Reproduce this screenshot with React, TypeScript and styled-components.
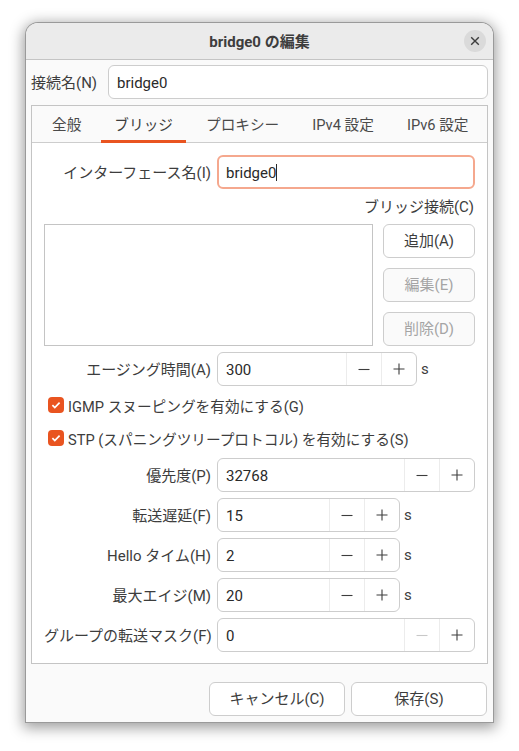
import React from 'react'
import styled, { createGlobalStyle } from 'styled-components'

const GlobalStyle = createGlobalStyle`
  html, body {
    margin: 0;
    padding: 0;
    background: #ffffff;
  }
  body {
    font-family: Roboto, "Noto Sans CJK JP", sans-serif;
    font-size: 15px;
    color: #3d3d3d;
  }
`

const TABS = ['全般', 'ブリッジ', 'プロキシー', 'IPv4 設定', 'IPv6 設定']

const Minus = () => (
  <svg width="14" height="14" viewBox="0 0 14 14">
    <path d="M1.5 7.5h11" stroke="currentColor" strokeWidth="1.1" fill="none" />
  </svg>
)

const Plus = () => (
  <svg width="14" height="14" viewBox="0 0 14 14">
    <path d="M1.5 7h11M7 1.5v11" stroke="currentColor" strokeWidth="1.1" fill="none" />
  </svg>
)

const Spin = (props: { value: string; width: number; unit?: boolean; minusOff?: boolean }) => {
  const { value, width, unit, minusOff } = props
  return (
    <>
      <SpinBox $width={width}>
        <SpinValue>{value}</SpinValue>
        <SpinButton $off={minusOff}><Minus /></SpinButton>
        <SpinButton><Plus /></SpinButton>
      </SpinBox>
      {unit && <Unit>s</Unit>}
    </>
  )
}

const Check = (props: { children: React.ReactNode }) => (
  <CheckRow>
    <CheckBox>
      <svg width="12" height="12" viewBox="0 0 12 12">
        <path d="M2.4 6.2l2.4 2.4 4.8-4.9" stroke="#fff" strokeWidth="1.7" fill="none" />
      </svg>
    </CheckBox>
    {props.children}
  </CheckRow>
)

const App = () => {
  return (
    <Stage>
      <GlobalStyle />
      <Dialog>
        <Header>
          <Title>bridge0 の編集</Title>
          <CloseButton>
            <svg width="12" height="12" viewBox="0 0 12 12">
              <path d="M2.2 2.2l7.6 7.6M9.8 2.2l-7.6 7.6" stroke="#3d3d3d" strokeWidth="1.4" fill="none" />
            </svg>
          </CloseButton>
        </Header>
        <Body>
          <NameRow>
            <NameLabel>接続名(N)</NameLabel>
            <Entry>bridge0</Entry>
          </NameRow>
          <Notebook>
            <TabBar>
              {TABS.map((t) => (
                <Tab key={t} $active={t === 'ブリッジ'}>{t}</Tab>
              ))}
            </TabBar>
            <Page>
              <IfaceRow>
                <FieldLabel>インターフェース名(I)</FieldLabel>
                <FocusedEntry>bridge0<Caret /></FocusedEntry>
              </IfaceRow>
              <ConnLabel>ブリッジ接続(C)</ConnLabel>
              <ListRow>
                <ListBox />
                <ListButtons>
                  <Button>追加(A)</Button>
                  <Button $off>編集(E)</Button>
                  <Button $off>削除(D)</Button>
                </ListButtons>
              </ListRow>
              <FieldRow>
                <FieldLabel>エージング時間(A)</FieldLabel>
                <Spin value="300" width={200} unit />
              </FieldRow>
              <Checks>
                <Check>IGMP スヌーピングを有効にする(G)</Check>
                <Check>STP (スパニングツリープロトコル) を有効にする(S)</Check>
              </Checks>
              <Fields>
                <FieldRow>
                  <FieldLabel>優先度(P)</FieldLabel>
                  <Spin value="32768" width={258} />
                </FieldRow>
                <FieldRow>
                  <FieldLabel>転送遅延(F)</FieldLabel>
                  <Spin value="15" width={183} unit />
                </FieldRow>
                <FieldRow>
                  <FieldLabel>Hello タイム(H)</FieldLabel>
                  <Spin value="2" width={183} unit />
                </FieldRow>
                <FieldRow>
                  <FieldLabel>最大エイジ(M)</FieldLabel>
                  <Spin value="20" width={183} unit />
                </FieldRow>
                <FieldRow>
                  <FieldLabel>グループの転送マスク(F)</FieldLabel>
                  <Spin value="0" width={258} minusOff />
                </FieldRow>
              </Fields>
            </Page>
          </Notebook>
          <Actions>
            <ActionButton>キャンセル(C)</ActionButton>
            <ActionButton>保存(S)</ActionButton>
          </Actions>
        </Body>
      </Dialog>
    </Stage>
  )
}

export default App

const Stage = styled.div`
  padding: 23px 26px;
  width: 467px;
  height: 699px;
`

const Dialog = styled.div`
  width: 467px;
  height: 699px;
  box-sizing: border-box;
  display: flex;
  flex-direction: column;
  background: #fafafa;
  border-radius: 12px 12px 0 0;
  box-shadow: 0 0 0 1px #9a9a9a, 0 3px 14px 3px rgba(0, 0, 0, 0.38);
`

const Header = styled.div`
  position: relative;
  flex: none;
  height: 37px;
  box-sizing: border-box;
  padding-bottom: 2px;
  display: flex;
  align-items: center;
  justify-content: center;
  background: #ebebeb;
  border-bottom: 1px solid #c4c4c4;
  border-radius: 12px 12px 0 0;
`

const Title = styled.div`
  font-size: 15px;
  font-weight: 700;
  color: #3d3d3d;
`

const CloseButton = styled.div`
  position: absolute;
  right: 7px;
  top: 7px;
  width: 22px;
  height: 22px;
  border-radius: 50%;
  background: #dadada;
  display: flex;
  align-items: center;
  justify-content: center;
`

const Body = styled.div`
  flex: 1;
  display: flex;
  flex-direction: column;
  padding: 5px 5px 6px 5px;
`

const NameRow = styled.div`
  display: flex;
  align-items: center;
  gap: 13px;
  height: 34px;
`

const NameLabel = styled.div`
  width: 64px;
  padding-bottom: 2px;
  text-align: right;
  white-space: nowrap;
`

const Entry = styled.div`
  flex: 1;
  height: 34px;
  box-sizing: border-box;
  display: flex;
  align-items: center;
  padding: 1px 8px 0;
  background: #ffffff;
  border: 1px solid #cdcdcd;
  border-radius: 6px;
  color: #2a2a2a;
`

const Notebook = styled.div`
  margin-top: 6px;
  height: 559px;
  box-sizing: border-box;
  display: flex;
  flex-direction: column;
  border: 1px solid #c4c4c4;
`

const TabBar = styled.div`
  flex: none;
  height: 37px;
  box-sizing: border-box;
  display: flex;
  align-items: stretch;
  gap: 7px;
  padding-left: 7px;
  background: #fafafa;
  border-bottom: 1px solid #cdcdcd;
`

const Tab = styled.div<{ $active?: boolean }>`
  display: flex;
  align-items: center;
  justify-content: center;
  box-sizing: border-box;
  padding: 0 13px 2px;
  margin-bottom: -1px;
  font-size: 14.67px;
  white-space: nowrap;
  color: ${({ $active }) => ($active ? '#3d3d3d' : '#4a4a4a')};
  box-shadow: ${({ $active }) => ($active ? 'inset 0 -3px 0 #e95420' : 'none')};
`

const Page = styled.div`
  flex: 1;
  display: flex;
  flex-direction: column;
  padding: 12px 12px 0 12px;
  background: #ffffff;
`

const IfaceRow = styled.div`
  display: flex;
  align-items: center;
  gap: 6px;
`

const FieldLabel = styled.div`
  width: 167px;
  flex: none;
  padding-bottom: 2px;
  text-align: right;
  white-space: nowrap;
`

const FocusedEntry = styled.div`
  width: 258px;
  height: 34px;
  box-sizing: border-box;
  display: flex;
  align-items: center;
  padding: 1px 7px 0;
  background: #ffffff;
  border: 2px solid #f5a88e;
  border-radius: 6px;
  color: #2a2a2a;
`

const Caret = styled.span`
  width: 1px;
  height: 17px;
  background: #2a2a2a;
`

const ConnLabel = styled.div`
  align-self: flex-end;
  margin-top: 8px;
  height: 20px;
  line-height: 20px;
  margin-right: 1px;
  white-space: nowrap;
`

const ListRow = styled.div`
  display: flex;
  gap: 10px;
  margin-top: 7px;
`

const ListBox = styled.div`
  width: 329px;
  height: 122px;
  box-sizing: border-box;
  background: #ffffff;
  border: 1px solid #c4c4c4;
`

const ListButtons = styled.div`
  display: flex;
  flex-direction: column;
  gap: 10px;
`

const Button = styled.div<{ $off?: boolean }>`
  width: 92px;
  height: 34px;
  box-sizing: border-box;
  padding-bottom: 3px;
  display: flex;
  align-items: center;
  justify-content: center;
  border: 1px solid #cdcdcd;
  border-radius: 6px;
  background: ${({ $off }) => ($off ? '#fafafa' : '#ffffff')};
  color: ${({ $off }) => ($off ? '#a5a5a5' : '#3d3d3d')};
`

const FieldRow = styled.div`
  display: flex;
  align-items: center;
  gap: 6px;
  margin-top: 6px;
`

const Checks = styled.div`
  display: flex;
  flex-direction: column;
  gap: 11px;
  margin-top: 8px;
`

const Fields = styled.div`
  display: flex;
  flex-direction: column;
  margin-top: 3px;
`

const SpinBox = styled.div<{ $width: number }>`
  width: ${({ $width }) => $width}px;
  height: 34px;
  box-sizing: border-box;
  display: flex;
  align-items: stretch;
  background: #ffffff;
  border: 1px solid #cdcdcd;
  border-radius: 6px;
`

const SpinValue = styled.div`
  flex: 1;
  display: flex;
  align-items: center;
  padding: 1px 0 0 8px;
  color: #2a2a2a;
`

const SpinButton = styled.div<{ $off?: boolean }>`
  width: 35px;
  box-sizing: border-box;
  display: flex;
  align-items: center;
  justify-content: center;
  border-left: 1px solid #ececec;
  color: ${({ $off }) => ($off ? '#c8c8c8' : '#3d3d3d')};
`

const Unit = styled.span`
  margin-left: -2px;
  color: #3d3d3d;
`

const CheckRow = styled.div`
  display: flex;
  align-items: center;
  gap: 4px;
  height: 22px;
  padding-left: 4px;
  font-size: 14.67px;
  white-space: nowrap;
`

const CheckBox = styled.div`
  width: 16px;
  height: 16px;
  flex: none;
  border-radius: 4px;
  background: #e95420;
  display: flex;
  align-items: center;
  justify-content: center;
`

const Actions = styled.div`
  margin-top: auto;
  padding-right: 1px;
  display: flex;
  justify-content: flex-end;
  gap: 6px;
`

const ActionButton = styled.div`
  width: 136px;
  height: 34px;
  box-sizing: border-box;
  padding-bottom: 3px;
  display: flex;
  align-items: center;
  justify-content: center;
  background: #ffffff;
  border: 1px solid #cdcdcd;
  border-radius: 6px;
`
